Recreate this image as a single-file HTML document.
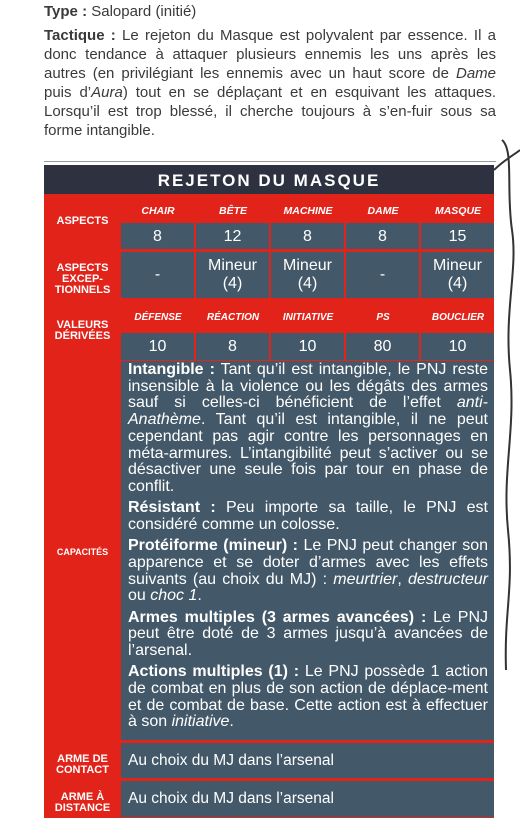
<!DOCTYPE html>
<html><head><meta charset="utf-8"><style>
body{margin:0;width:520px;height:838px;background:#fff;position:relative;overflow:hidden;font-family:"Liberation Sans",sans-serif;}
.top{position:absolute;left:44px;top:2px;width:452px;font-size:15px;line-height:19px;color:#3a3a3a;text-align:justify;}
.top p{margin:0 0 5px 0}
.hr{position:absolute;left:44px;top:161px;width:452px;height:1px;background:#999}
.tbl{position:absolute;left:44px;top:165px;width:450px;height:653px;background:#e2231a;}
.hd{position:absolute;left:0;top:0;width:450px;height:29px;background:#2e3140;color:#fff;font-weight:bold;font-size:17px;letter-spacing:2px;text-align:center;line-height:32px}
.a{position:absolute;background:#435868;color:#fff;font-size:16px;text-align:center}
.lab{position:absolute;color:#fff;font-weight:bold;font-size:11px;text-align:center;line-height:11px;width:77px;left:0}
.h{position:absolute;color:#fff;font-weight:bold;font-style:italic;font-size:10.5px;text-align:center;width:74px}
.cap{position:absolute;left:77px;top:196px;width:373px;height:379px;background:#435868;color:#fff;font-size:16px;line-height:16.7px;box-sizing:border-box;padding:1px 6px 0 7px;text-align:justify;}
.cap p{margin:0 0 4.6px 0}
</style></head><body>
<div class="top">
<p><b>Type :</b> Salopard (initié)</p>
<p><b>Tactique :</b> Le rejeton du Masque est polyvalent par essence. Il a donc tendance à attaquer plusieurs ennemis les uns après les autres (en privilégiant les ennemis avec un haut score de <i>Dame</i> puis d’<i>Aura</i>) tout en se déplaçant et en esquivant les attaques. Lorsqu’il est trop blessé, il cherche toujours à s’en-fuir sous sa forme intangible.</p>
</div>
<div class="hr"></div>
<div class="tbl">
<div class="hd">REJETON DU MASQUE</div>
<div class="lab" style="top:51px">ASPECTS</div>
<div class="lab" style="top:98px">ASPECTS<br>EXCEP-<br>TIONNELS</div>
<div class="lab" style="top:155px">VALEURS<br>DÉRIVÉES</div>
<div class="lab" style="top:382px;font-size:9px">CAPACITÉS</div>
<div class="lab" style="top:589px">ARME DE<br>CONTACT</div>
<div class="lab" style="top:627px">ARME À<br>DISTANCE</div>

<div class="h" style="left:77px;top:40px">CHAIR</div>
<div class="h" style="left:152px;top:40px">BÊTE</div>
<div class="h" style="left:227px;top:40px">MACHINE</div>
<div class="h" style="left:302px;top:40px">DAME</div>
<div class="h" style="left:377px;top:40px">MASQUE</div>

<div class="a" style="left:77px;top:58px;width:73px;height:26px;line-height:27px">8</div>
<div class="a" style="left:152px;top:58px;width:73px;height:26px;line-height:27px">12</div>
<div class="a" style="left:227px;top:58px;width:73px;height:26px;line-height:27px">8</div>
<div class="a" style="left:302px;top:58px;width:73px;height:26px;line-height:27px">8</div>
<div class="a" style="left:377px;top:58px;width:73px;height:26px;line-height:27px">15</div>

<div class="a" style="left:77px;top:87px;width:73px;height:46px;line-height:46px">-</div>
<div class="a" style="left:152px;top:87px;width:73px;height:46px;line-height:18px;padding-top:5px;box-sizing:border-box">Mineur<br>(4)</div>
<div class="a" style="left:227px;top:87px;width:73px;height:46px;line-height:18px;padding-top:5px;box-sizing:border-box">Mineur<br>(4)</div>
<div class="a" style="left:302px;top:87px;width:73px;height:46px;line-height:46px">-</div>
<div class="a" style="left:377px;top:87px;width:73px;height:46px;line-height:18px;padding-top:5px;box-sizing:border-box">Mineur<br>(4)</div>

<div class="h" style="left:77px;top:147px;font-size:10px">DÉFENSE</div>
<div class="h" style="left:152px;top:147px;font-size:10px">RÉACTION</div>
<div class="h" style="left:227px;top:147px;font-size:10px">INITIATIVE</div>
<div class="h" style="left:302px;top:147px;font-size:10px">PS</div>
<div class="h" style="left:377px;top:147px;font-size:10px">BOUCLIER</div>

<div class="a" style="left:77px;top:168px;width:73px;height:27px;line-height:28px">10</div>
<div class="a" style="left:152px;top:168px;width:73px;height:27px;line-height:28px">8</div>
<div class="a" style="left:227px;top:168px;width:73px;height:27px;line-height:28px">10</div>
<div class="a" style="left:302px;top:168px;width:73px;height:27px;line-height:28px">80</div>
<div class="a" style="left:377px;top:168px;width:73px;height:27px;line-height:28px">10</div>

<div class="cap">
<p><b>Intangible :</b> Tant qu’il est intangible, le PNJ reste insensible à la violence ou les dégâts des armes sauf si celles-ci bénéficient de l’effet <i>anti-Anathème</i>. Tant qu’il est intangible, il ne peut cependant pas agir contre les personnages en méta-armures. L’intangibilité peut s’activer ou se désactiver une seule fois par tour en phase de conflit.</p>
<p><b>Résistant :</b> Peu importe sa taille, le PNJ est considéré comme un colosse.</p>
<p><b>Protéiforme (mineur) :</b> Le PNJ peut changer son apparence et se doter d’armes avec les effets suivants (au choix du MJ) : <i>meurtrier</i>, <i>destructeur</i> ou <i>choc 1</i>.</p>
<p><b>Armes multiples (3 armes avancées) :</b> Le PNJ peut être doté de 3 armes jusqu’à avancées de l’arsenal.</p>
<p><b>Actions multiples (1) :</b> Le PNJ possède 1 action de combat en plus de son action de déplace-ment et de combat de base. Cette action est à effectuer à son <i>initiative</i>.</p>
</div>
<div class="a" style="left:77px;top:578px;width:373px;height:35px;line-height:35px;text-align:left;padding-left:7px;box-sizing:border-box;font-size:15.5px">Au choix du MJ dans l’arsenal</div>
<div class="a" style="left:77px;top:616px;width:373px;height:36px;line-height:36px;text-align:left;padding-left:7px;box-sizing:border-box;font-size:15.5px">Au choix du MJ dans l’arsenal</div>
</div>
<svg style="position:absolute;left:494px;top:110px" width="26" height="600"><path d="M8 30 C20 40 12 80 18 120 S10 200 16 260 S8 360 14 420 S10 500 12 560" stroke="#333" stroke-width="2" fill="none"/><path d="M0 60 C10 50 20 45 26 40" stroke="#333" stroke-width="2" fill="none"/></svg>
</body></html>
